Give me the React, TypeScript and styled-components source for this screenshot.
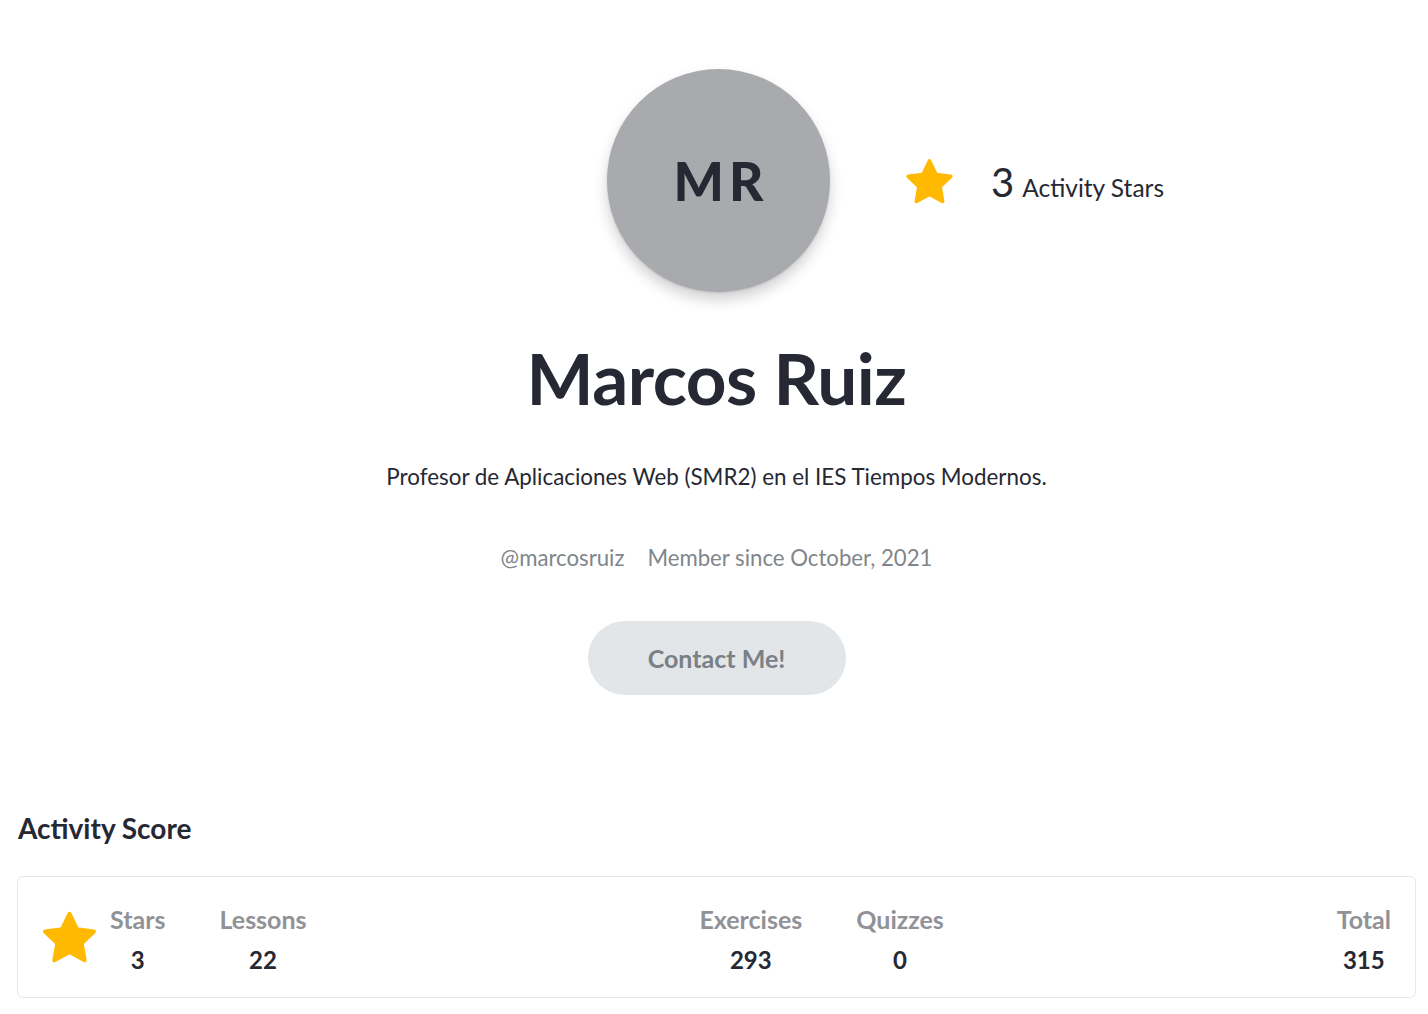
import React from "react";
import styled, { createGlobalStyle } from "styled-components";

const GlobalStyle = createGlobalStyle`
  html, body { margin: 0; padding: 0; background: #ffffff; }
  body { font-family: Lato, "Noto Sans", sans-serif; color: #262833; }
  * { box-sizing: border-box; }
`;

const Page = styled.div`
  padding: 0 12px 17px 17px;
`;

const Hero = styled.section`
  display: flex;
  flex-direction: column;
  align-items: center;
  padding-top: 69px;
`;

const TopRow = styled.div`
  width: 100%;
  display: grid;
  grid-template-columns: 1fr auto 1fr;
  align-items: center;
`;

const Avatar = styled.div`
  grid-column: 2;
  width: 223px;
  height: 223px;
  margin-left: 4px;
  border-radius: 50%;
  background: #a9aaad;
  box-shadow: 0 8px 14px rgba(0, 0, 0, 0.18), 0 1px 2px rgba(0,0,0,0.12);
  display: flex;
  align-items: center;
  justify-content: center;
  font-size: 53px;
  font-weight: 900;
  letter-spacing: 5px;
  color: #262833;
  padding-left: 5px;
`;

const StarsBadge = styled.div`
  grid-column: 3;
  display: flex;
  align-items: center;
  padding-left: 72px;
  padding-top: 3px;
`;

const StarsCount = styled.span`
  font-size: 40px;
  line-height: 1;
  margin-left: 34px;
  margin-right: 8px;
  font-weight: 400;
`;

const StarsText = styled.span`
  font-size: 24.5px;
  margin-top: 10px;
`;

const Name = styled.h1`
  margin: 46px 0 0;
  font-size: 71px;
  line-height: 80px;
  font-weight: 700;
  color: #262833;
  letter-spacing: -0.5px;
`;

const Bio = styled.p`
  margin: 44px 0 0;
  font-size: 22.4px;
  line-height: 30px;
  color: #262833;
`;

const Meta = styled.div`
  margin-top: 51px;
  display: flex;
  gap: 23px;
  font-size: 22.2px;
  line-height: 30px;
  color: #80868b;
`;

const ContactButton = styled.button`
  margin-top: 48px;
  width: 258px;
  height: 74px;
  border: none;
  border-radius: 37px;
  background: #e2e6e9;
  color: #7a8085;
  font-family: inherit;
  font-size: 25px;
  font-weight: 700;
  cursor: pointer;
`;

const SectionTitle = styled.h2`
  margin: 115px 0 0 1px;
  font-size: 28px;
  line-height: 36px;
  font-weight: 700;
  color: #262833;
`;

const ScoreCard = styled.div`
  margin-top: 30px;
  border: 1px solid #e6e7e9;
  border-radius: 6px;
  padding: 24px 24px 19px 20px;
  display: flex;
  align-items: center;
  justify-content: space-between;
`;

const Group = styled.div`
  display: flex;
  align-items: center;
  gap: 54px;
`;

const StarWrap = styled.div`
  display: flex;
  margin-right: -45px;
  margin-top: -2px;
`;

const Stat = styled.div`
  display: flex;
  flex-direction: column;
  align-items: center;
  gap: 5px;
`;

const StatLabel = styled.span`
  font-size: 25px;
  line-height: 36px;
  font-weight: 700;
  color: #909297;
`;

const StatValue = styled.span`
  font-size: 24px;
  line-height: 36px;
  font-weight: 700;
  color: #262833;
`;

const StarIcon = ({ size }: { size: number }) => (
  <svg width={size} height={size} viewBox="0 0 24 24" aria-hidden="true">
    <path
      d="M12 2.6l2.85 5.9 6.45.85-4.7 4.5 1.15 6.4L12 17.15 6.25 20.25l1.15-6.4-4.7-4.5 6.45-.85z"
      fill="#ffb900"
      stroke="#ffb900"
      strokeWidth="1.6"
      strokeLinejoin="round"
    />
  </svg>
);

const stats = {
  left: [
    { label: "Stars", value: "3" },
    { label: "Lessons", value: "22" },
  ],
  middle: [
    { label: "Exercises", value: "293" },
    { label: "Quizzes", value: "0" },
  ],
};

export default function App() {
  return (
    <>
      <GlobalStyle />
      <Page>
        <Hero>
          <TopRow>
            <Avatar>MR</Avatar>
            <StarsBadge>
              <StarIcon size={55} />
              <StarsCount>3</StarsCount>
              <StarsText>Activity Stars</StarsText>
            </StarsBadge>
          </TopRow>
          <Name>Marcos Ruiz</Name>
          <Bio>Profesor de Aplicaciones Web (SMR2) en el IES Tiempos Modernos.</Bio>
          <Meta>
            <span>@marcosruiz</span>
            <span>Member since October, 2021</span>
          </Meta>
          <ContactButton>Contact Me!</ContactButton>
        </Hero>
        <SectionTitle>Activity Score</SectionTitle>
        <ScoreCard>
          <Group>
            <StarWrap>
              <StarIcon size={63} />
            </StarWrap>
            {stats.left.map((s) => (
              <Stat key={s.label}>
                <StatLabel>{s.label}</StatLabel>
                <StatValue>{s.value}</StatValue>
              </Stat>
            ))}
          </Group>
          <Group>
            {stats.middle.map((s) => (
              <Stat key={s.label}>
                <StatLabel>{s.label}</StatLabel>
                <StatValue>{s.value}</StatValue>
              </Stat>
            ))}
          </Group>
          <Stat>
            <StatLabel>Total</StatLabel>
            <StatValue>315</StatValue>
          </Stat>
        </ScoreCard>
      </Page>
    </>
  );
}
